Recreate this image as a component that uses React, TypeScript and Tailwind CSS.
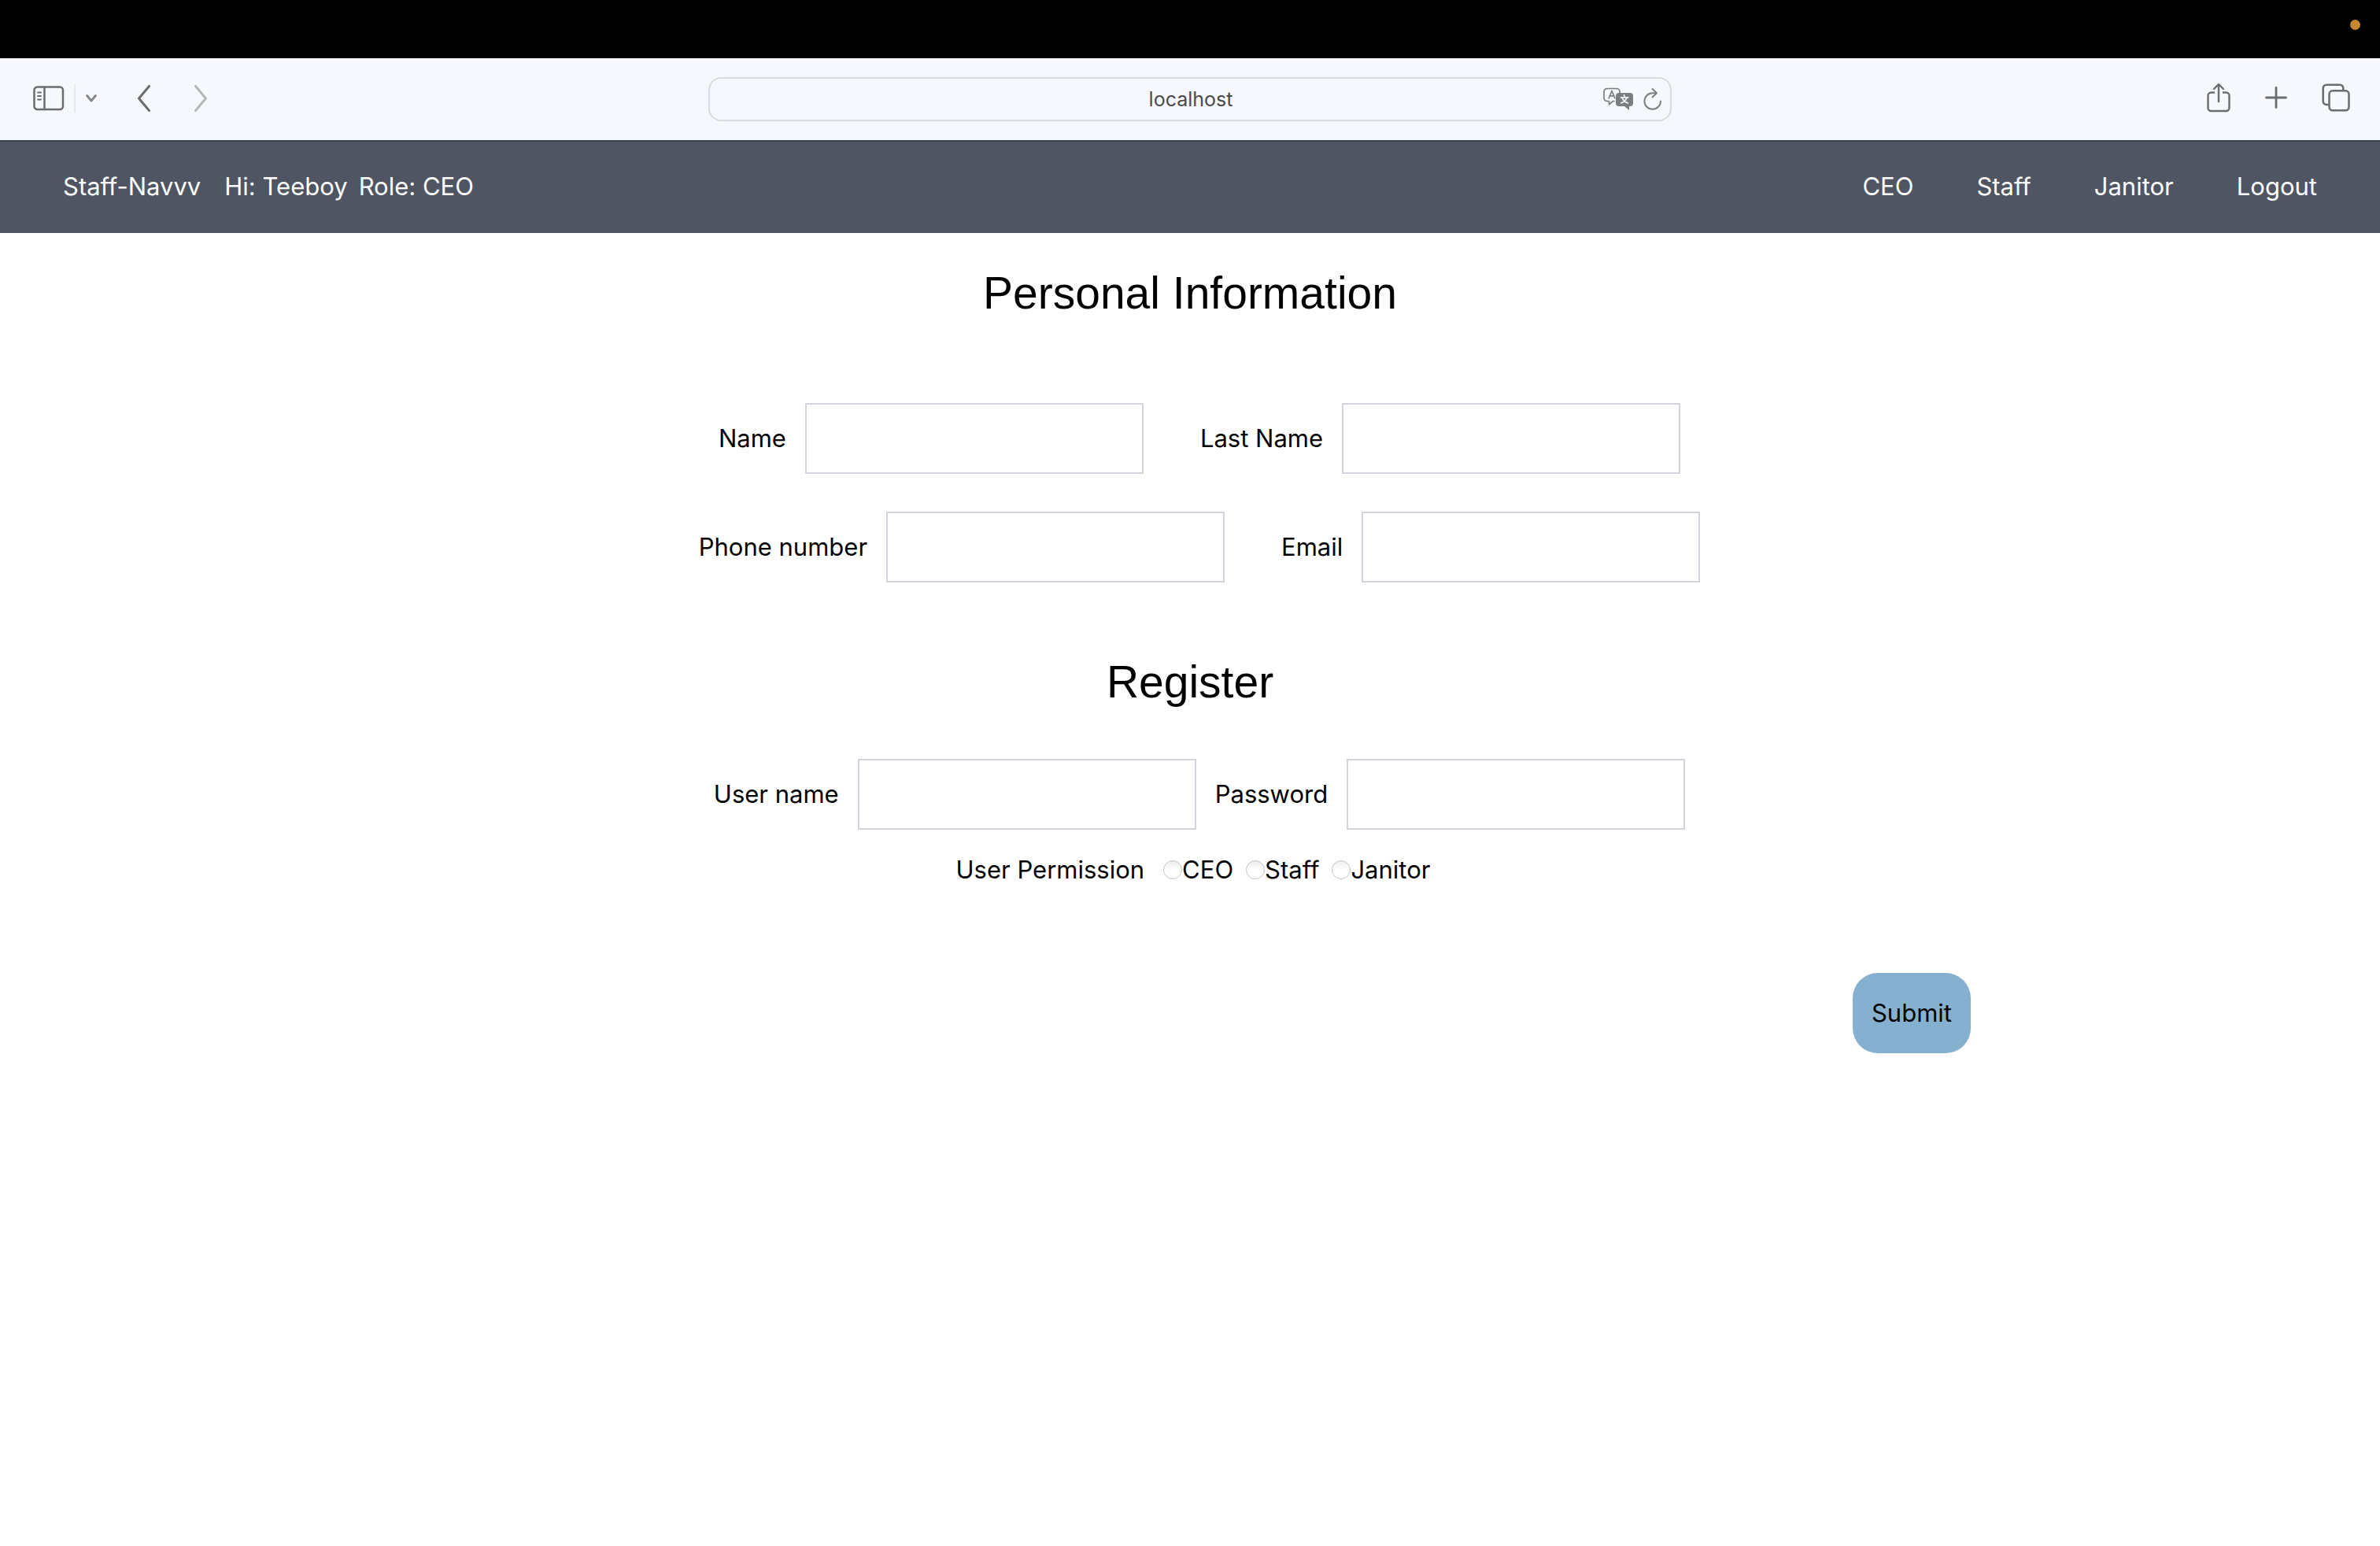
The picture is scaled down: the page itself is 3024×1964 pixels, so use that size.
import React from "react";

const stroke = {
  fill: "none",
  stroke: "currentColor",
  strokeLinecap: "round" as const,
  strokeLinejoin: "round" as const,
};

function SidebarIcon() {
  return (
    <svg width="40" height="32" viewBox="0 0 40 32" {...stroke} strokeWidth="2.5" aria-hidden="true">
      <rect x="1.5" y="1.5" width="36.5" height="28.5" rx="4" />
      <path d="M14.5 2v28" />
      <path d="M6 8.5h4M6 13h4M6 17.5h4" strokeWidth="1.8" />
    </svg>
  );
}

function ChevronDownIcon() {
  return (
    <svg width="16" height="12" viewBox="0 0 16 12" {...stroke} stroke="#85868b" strokeWidth="2.8" aria-hidden="true">
      <path d="M2.5 2.5L8 9l5.5-6.5" />
    </svg>
  );
}

function BackIcon() {
  return (
    <svg width="18" height="34" viewBox="0 0 18 34" {...stroke} strokeWidth="3" aria-hidden="true">
      <path d="M15.5 1.5L2.5 17l13 15.5" />
    </svg>
  );
}

function ForwardIcon() {
  return (
    <svg width="18" height="34" viewBox="0 0 18 34" {...stroke} strokeWidth="3" aria-hidden="true">
      <path d="M2.5 1.5l13 15.5-13 15.5" />
    </svg>
  );
}

function TranslateIcon() {
  return (
    <svg width="40" height="30" viewBox="0 0 40 30" {...stroke} aria-hidden="true">
      <path
        d="M15 17.5h-1.500L8.500 21.800V17.500H6a4 4 0 0 1-4-4V5.500a4 4 0 0 1 4-4h12a4 4 0 0 1 4 4V7"
        strokeWidth="1.7"
      />
      <path d="M8.2 13.8L12 4.5l3.800 9.300M9.500 10.800h5" strokeWidth="1.7" />
      <path
        d="M21 7h14a4 4 0 0 1 4 4v9a4 4 0 0 1-4 4h-1v5l-6-5h-7a4 4 0 0 1-4-4v-9a4 4 0 0 1 4-4z"
        fill="currentColor"
        stroke="none"
      />
      <path
        d="M27.500 9.800l.7 1.700M23.500 12.800h9.200M25 12.800c1 3.400 3.500 6 7.500 7.200M31 12.800c-1 3.400-3.500 6-7.500 7.200"
        stroke="#f6f8fd"
        strokeWidth="1.7"
      />
    </svg>
  );
}

function ReloadIcon() {
  return (
    <svg width="24" height="30" viewBox="0 0 24 30" {...stroke} strokeWidth="1.9" aria-hidden="true">
      <path d="M22 17.500A10.300 10.300 0 1 1 11.700 7.200H16" />
      <path d="M11.500 2l5.500 5.200-5.500 5.300" />
    </svg>
  );
}

function ShareIcon() {
  return (
    <svg width="30" height="38" viewBox="0 0 30 38" {...stroke} strokeWidth="2.4" aria-hidden="true">
      <path d="M10 12.500H5.500a4 4 0 0 0-4 4V32a4 4 0 0 0 4 4h19a4 4 0 0 0 4-4V16.500a4 4 0 0 0-4-4H20" strokeLinecap="butt" />
      <path d="M15 24V2.500M9 8l6-6 6 6" />
    </svg>
  );
}

function PlusIcon() {
  return (
    <svg width="28" height="28" viewBox="0 0 28 28" {...stroke} strokeWidth="2.8" aria-hidden="true">
      <path d="M14 1.500v25M1.500 14h25" />
    </svg>
  );
}

function TabsIcon() {
  return (
    <svg width="36" height="36" viewBox="0 0 36 36" {...stroke} strokeWidth="2.5" aria-hidden="true">
      <path d="M8.500 27H6a4.300 4.300 0 0 1-4.300-4.300V6A4.300 4.300 0 0 1 6 1.700h17A4.300 4.300 0 0 1 27.300 6v2.500" />
      <rect x="9.500" y="9.300" width="25" height="25" rx="4.300" />
    </svg>
  );
}

function BrowserBar() {
  return (
    <div className="grid h-[104px] grid-cols-[1fr_auto_1fr] items-center bg-[#f6f8fd] text-[#6b6c70]">
      <div className="flex items-center pb-0.5 pl-[42px]">
        <button aria-label="Show sidebar"><SidebarIcon /></button>
        <div className="ml-3 h-9 w-0.5 bg-[#e6e8ec]" />
        <button aria-label="Tab groups" className="ml-3"><ChevronDownIcon /></button>
        <button aria-label="Back" className="ml-[50px]"><BackIcon /></button>
        <button aria-label="Forward" className="ml-[54px] text-[#b5b7bb]"><ForwardIcon /></button>
      </div>
      <div className="flex h-14 w-[1224px] items-center rounded-2xl border-2 border-[#d9dbe0] pr-2.5">
        <div className="w-[88px]" />
        <input
          aria-label="Address"
          defaultValue="localhost"
          className="min-w-0 flex-1 bg-transparent text-center text-[25px] text-[#4a4b4d] outline-none"
        />
        <div className="flex items-center gap-3 text-[#7b7d80]">
          <button aria-label="Translate"><TranslateIcon /></button>
          <button aria-label="Reload"><ReloadIcon /></button>
        </div>
      </div>
      <div className="flex items-center justify-end gap-11 pr-[38px] pb-1">
        <button aria-label="Share"><ShareIcon /></button>
        <button aria-label="New tab"><PlusIcon /></button>
        <button aria-label="Show tabs"><TabsIcon /></button>
      </div>
    </div>
  );
}

function Field({ id, label, type = "text" }: { id: string; label: string; type?: string }) {
  return (
    <div className="flex items-center">
      <label htmlFor={id} className="mx-6">{label}</label>
      <input id={id} type={type} className="h-[90px] w-[430px] border-2 border-[#d1d5db] px-4 outline-none" />
    </div>
  );
}

export default function App() {
  return (
    <div className="min-h-screen bg-white font-['Inter','Liberation_Sans',sans-serif] text-[31px] leading-[48px] text-black">
      <div className="flex h-[74px] items-start justify-end bg-black pt-[25px] pr-[25px]">
        <div className="size-[13px] rounded-full bg-[#c4862f]" />
      </div>
      <BrowserBar />
      <nav className="flex h-[118px] items-center justify-between border-t-2 border-[#36404c] bg-[#4f5562] px-20 pb-0.5 text-white">
        <div className="flex">
          <span className="mr-[30px]">Staff-Navvv</span>
          <span className="mr-3.5">Hi: Teeboy</span>
          <span>Role: CEO</span>
        </div>
        <div className="flex gap-20">
          <a href="#ceo">CEO</a>
          <a href="#staff">Staff</a>
          <a href="#janitor">Janitor</a>
          <a href="#logout">Logout</a>
        </div>
      </nav>
      <form>
        <h1 className="mt-10 text-center font-['Liberation_Sans',sans-serif] text-[57px] leading-[72px]">Personal Information</h1>
        <div className="mt-[104px] flex justify-center gap-12">
          <Field id="name" label="Name" />
          <Field id="last-name" label="Last Name" />
        </div>
        <div className="mt-12 flex justify-center gap-12">
          <Field id="phone" label="Phone number" />
          <Field id="email" label="Email" type="email" />
        </div>
        <h2 className="mt-[90px] text-center font-['Liberation_Sans',sans-serif] text-[57px] leading-[72px]">Register</h2>
        <div className="mt-[62px] flex justify-center">
          <Field id="username" label="User name" />
          <Field id="password" label="Password" type="password" />
        </div>
        <div role="radiogroup" aria-labelledby="permission-label" className="mt-[27px] flex justify-center">
          <span id="permission-label" className="mx-6">User Permission</span>
          {["CEO", "Staff", "Janitor"].map((role) => (
            <label key={role} className="mr-4 flex items-center">
              <input
                type="radio"
                name="permission"
                value={role}
                className="size-6 appearance-none rounded-full border border-[#c4c4c4] bg-linear-to-b from-[#ececec] to-white to-50% checked:border-8 checked:border-blue-500"
              />
              {role}
            </label>
          ))}
        </div>
        <div className="mt-[107px] flex w-5/6 justify-end pr-4">
          <button type="submit" className="rounded-[32px] bg-[#85b0d0] px-6 py-[27px]">Submit</button>
        </div>
      </form>
    </div>
  );
}
